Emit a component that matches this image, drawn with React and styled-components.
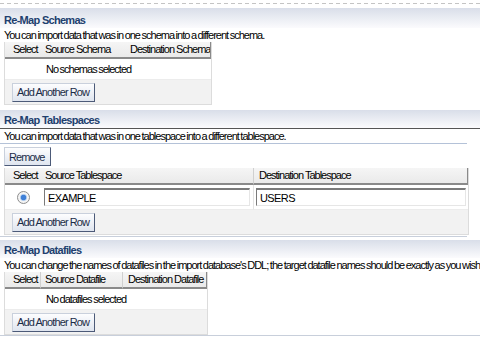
import React from "react";
import styled, {createGlobalStyle} from "styled-components";

const GlobalStyle = createGlobalStyle`
body {
margin: 0;
background: #fff;
font-family: "Liberation Sans", Arial, sans-serif;
font-size: 11px;
color: #000;
}
`;

export const Page = styled.div`
width: 480px;
height: 338px;
overflow: hidden;
padding-top: 3px;
box-sizing: border-box;
`;

export const Dashes = styled.div`
height: 1px;
background-image: linear-gradient(to right, #c4c4c4 0 4px, transparent 4px 7px);
background-size: 7px 1px;
margin-bottom: 4px;
`;

export const Section = styled.section`
display: flex;
flex-direction: column;
align-items: flex-start;
margin-top: ${props => props.gap || 0}px;
`;

export const Band = styled.h2`
align-self: stretch;
box-sizing: border-box;
margin: 0;
height: ${props => props.height || 19}px;
padding: 0 4px 1px;
display: flex;
align-items: flex-end;
background: linear-gradient(to bottom, #d9dee9, #fbfbfd);
border-bottom: ${props => props.ruled ? "1px solid #555" : "0"};
font-size: 11px;
line-height: 13px;
font-weight: 700;
letter-spacing: -0.7px;
color: #213f6e;
`;

export const Intro = styled.p`
margin: 0;
padding: 0 4px;
height: ${props => props.height || 14}px;
line-height: 14px;
white-space: nowrap;
letter-spacing: -1px;
word-spacing: -0.5px;
border-bottom: ${props => props.ruled ? "1px solid #b4c2d8" : "0"};
align-self: ${props => props.ruled ? "stretch" : "auto"};
margin-right: ${props => props.ruled ? "13px" : "0"};
`;

export const Grid = styled.div`
margin-left: 4px;
width: ${props => props.width}px;
border: 1px solid #dcdcdc;
border-top: 0;
display: grid;
grid-template-columns: ${props => props.cols};
`;

export const HeadCell = styled.div`
height: 15px;
line-height: 15px;
padding-left: ${props => props.pad || 4}px;
background: linear-gradient(to bottom, #f5f5f5, #eaeaea);
border-bottom: 2px solid #8a8a8a;
border-right: ${props => props.last ? "1px solid #8a8a8a" : props.split ? "1px solid #d0d0d0" : "0"};
letter-spacing: -1px;
white-space: nowrap;
overflow: hidden;
`;

export const EmptyRow = styled.div`
grid-column: 1 / -1;
height: 20px;
line-height: 20px;
padding-left: 41px;
background: #fff;
letter-spacing: -1px;
word-spacing: -0.5px;
border-bottom: 1px solid #ececec;
`;

export const BodyCell = styled.div`
height: 24px;
display: flex;
align-items: center;
padding: 0 ${props => props.inset || 2}px;
background: #fff;
border-right: ${props => props.split ? "1px solid #e4e4e4" : "0"};
border-bottom: 1px solid #ececec;
justify-content: ${props => props.center ? "center" : "flex-start"};
`;

export const Foot = styled.div`
grid-column: 1 / -1;
height: 24px;
background: #f2f2f2;
display: flex;
align-items: center;
padding-left: 7px;
`;

export const Button = styled.button`
font-family: "Liberation Sans", Arial, sans-serif;
font-size: 11px;
letter-spacing: -0.9px;
color: #1b2c48;
height: 19px;
padding: 0 5px 0 4px;
margin: ${props => props.spaced ? "3px 0 2px 4px" : "0"};
background: linear-gradient(to bottom, #fdfdfe, #dfe5ef);
border: 1px solid #c9d0dc;
border-right-color: #4c5a78;
border-bottom-color: #4c5a78;
border-radius: 0;
cursor: pointer;
`;

export const Field = styled.input`
width: 100%;
height: 18px;
box-sizing: border-box;
font-family: "Liberation Sans", Arial, sans-serif;
font-size: 11px;
letter-spacing: -0.6px;
padding: 0 3px;
border: 1px solid #e6e6e6;
border-top: 2px solid #7a7a7a;
border-left: 1px solid #7a7a7a;
outline: none;
`;

export const Radio = styled.span`
width: 11px;
height: 11px;
border-radius: 50%;
border: 1px solid #8d8d8d;
background: radial-gradient(circle, #3f7fd6 0 2.5px, #a9c8ee 3px, #f4f4f4 4px);
`;

export const BottomRule = styled.div`
align-self: stretch;
height: 1px;
background: #c8cfdb;
margin-top: ${props => props.gap || 0}px;
margin-right: ${props => props.short ? 13 : 0}px;
`;

const App = () => {
    return (
        <>
            <GlobalStyle/>
            <Page>
                <Dashes/>
                <Section>
                    <Band height={20}>Re-Map Schemas</Band>
                    <Intro>You can import data that was in one schema into a different schema.</Intro>
                    <Grid width={206} cols="36px 85px 1fr">
                        <HeadCell pad={8}>Select</HeadCell>
                        <HeadCell>Source Schema</HeadCell>
                        <HeadCell last>Destination Schema</HeadCell>
                        <EmptyRow>No schemas selected</EmptyRow>
                        <Foot>
                            <Button>Add Another Row</Button>
                        </Foot>
                    </Grid>
                </Section>
                <Section gap={5}>
                    <Band ruled height={19}>Re-Map Tablespaces</Band>
                    <Intro ruled height={14}>You can import data that was in one tablespace into a different tablespace.</Intro>
                    <Button spaced>Remove</Button>
                    <Grid width={463} cols="36px 213px 1fr">
                        <HeadCell pad={8}>Select</HeadCell>
                        <HeadCell split>Source Tablespace</HeadCell>
                        <HeadCell pad={5} last>Destination Tablespace</HeadCell>
                        <BodyCell center>
                            <Radio/>
                        </BodyCell>
                        <BodyCell split inset={3}>
                            <Field readOnly value="EXAMPLE"/>
                        </BodyCell>
                        <BodyCell>
                            <Field readOnly value="USERS"/>
                        </BodyCell>
                        <Foot>
                            <Button>Add Another Row</Button>
                        </Foot>
                    </Grid>
                    <BottomRule short gap={1}/>
                </Section>
                <Section gap={3}>
                    <Band height={18}>Re-Map Datafiles</Band>
                    <Intro height={14}>You can change the names of datafiles in the import database's DDL; the target datafile names should be exactly as you wish them to appear.</Intro>
                    <Grid width={202} cols="36px 82px 1fr">
                        <HeadCell pad={8} split>Select</HeadCell>
                        <HeadCell split>Source Datafile</HeadCell>
                        <HeadCell pad={5} last>Destination Datafile</HeadCell>
                        <EmptyRow>No datafiles selected</EmptyRow>
                        <Foot>
                            <Button>Add Another Row</Button>
                        </Foot>
                    </Grid>
                    <BottomRule/>
                </Section>
            </Page>
        </>
    )
};

export default App;
